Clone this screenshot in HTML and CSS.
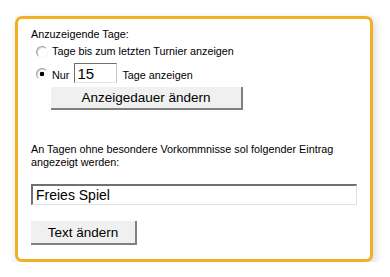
FILE: index.html
```html
<!DOCTYPE html>
<html lang="de">
<head>
  <meta charset="UTF-8">
  <title>Anzeige</title>
  <link rel="stylesheet" href="styles.css">
</head>
<body>

<div class="panel">
  <div class="caption">Anzuzeigende Tage:</div>

  <label class="row">
    <input type="radio" name="mode" class="radio">
    <span>Tage bis zum letzten Turnier anzeigen</span>
  </label>

  <label class="row row-days">
    <input type="radio" name="mode" class="radio" checked>
    <span>Nur</span>
    <input type="text" class="days" value="15">
    <span>Tage anzeigen</span>
  </label>

  <button class="btn btn-wide">Anzeigedauer ändern</button>

  <p class="note">An Tagen ohne besondere Vorkommnisse sol folgender Eintrag angezeigt werden:</p>

  <input type="text" class="entry" value="Freies Spiel">

  <button class="btn btn-text">Text ändern</button>
</div>

</body>
</html>
```

FILE: styles.css
```css
body {
  margin: 0;
  background: #fff;
  font-family: 'Liberation Sans', Arial, sans-serif;
  font-size: 10.8px;
  line-height: 13px;
  color: #000;
}

.panel {
  box-sizing: border-box;
  width: 358px;
  height: 246px;
  margin: 16px 0 0 15px;
  padding: 9px 13px 0;
  border: 3px solid #f2af22;
  border-radius: 7px;
  background: #fff;
  box-shadow: 2px 3px 8px rgba(0, 0, 0, 0.16);
}

.row {
  display: flex;
  align-items: center;
  margin-top: 4px;
  padding-left: 5px;
}

.row-days {
  align-items: baseline;
  margin-top: 5px;
}

.radio {
  appearance: none;
  box-sizing: border-box;
  width: 12px;
  height: 12px;
  margin: 0 4px 0 0;
  border: 1px solid;
  border-color: #a0a0a0 #f4f4f4 #f4f4f4 #a0a0a0;
  border-radius: 50%;
  background: #fff;
  box-shadow: inset 1px 1px 0 #d8d8d8;
  flex: none;
}

.radio:checked {
  background: radial-gradient(circle, #000 0, #000 2px, #fff 2.6px);
}

.row-days .radio {
  align-self: center;
  position: relative;
  top: 1px;
}

.days {
  box-sizing: border-box;
  width: 43px;
  height: 20px;
  margin: 0 5px 0 5px;
  padding: 0 2px;
  border: 1px solid;
  border-color: #6e6e6e #c8c8c8 #e3e3e3 #6e6e6e;
  font-family: inherit;
  font-size: 15px;
}

.btn {
  display: block;
  box-sizing: border-box;
  padding: 0;
  border: 0;
  border-right: 2px solid #808080;
  border-bottom: 2px solid #808080;
  background: #f0f0f0;
  font-family: inherit;
  font-size: 13.5px;
  color: #000;
}

.btn-wide {
  width: 192px;
  height: 23px;
  margin: 4px 0 0 20px;
}

.note {
  margin: 33px 0 0;
}

.entry {
  display: block;
  box-sizing: border-box;
  width: 326px;
  height: 21px;
  margin: 15px 0 0;
  padding: 0 3px;
  border: 2px solid;
  border-color: #707070 #e0e0e0 #e0e0e0 #707070;
  border-width: 2px 1px 1px 2px;
  font-family: inherit;
  font-size: 14px;
}

.btn-text {
  width: 106px;
  height: 24px;
  margin-top: 16px;
}
```
